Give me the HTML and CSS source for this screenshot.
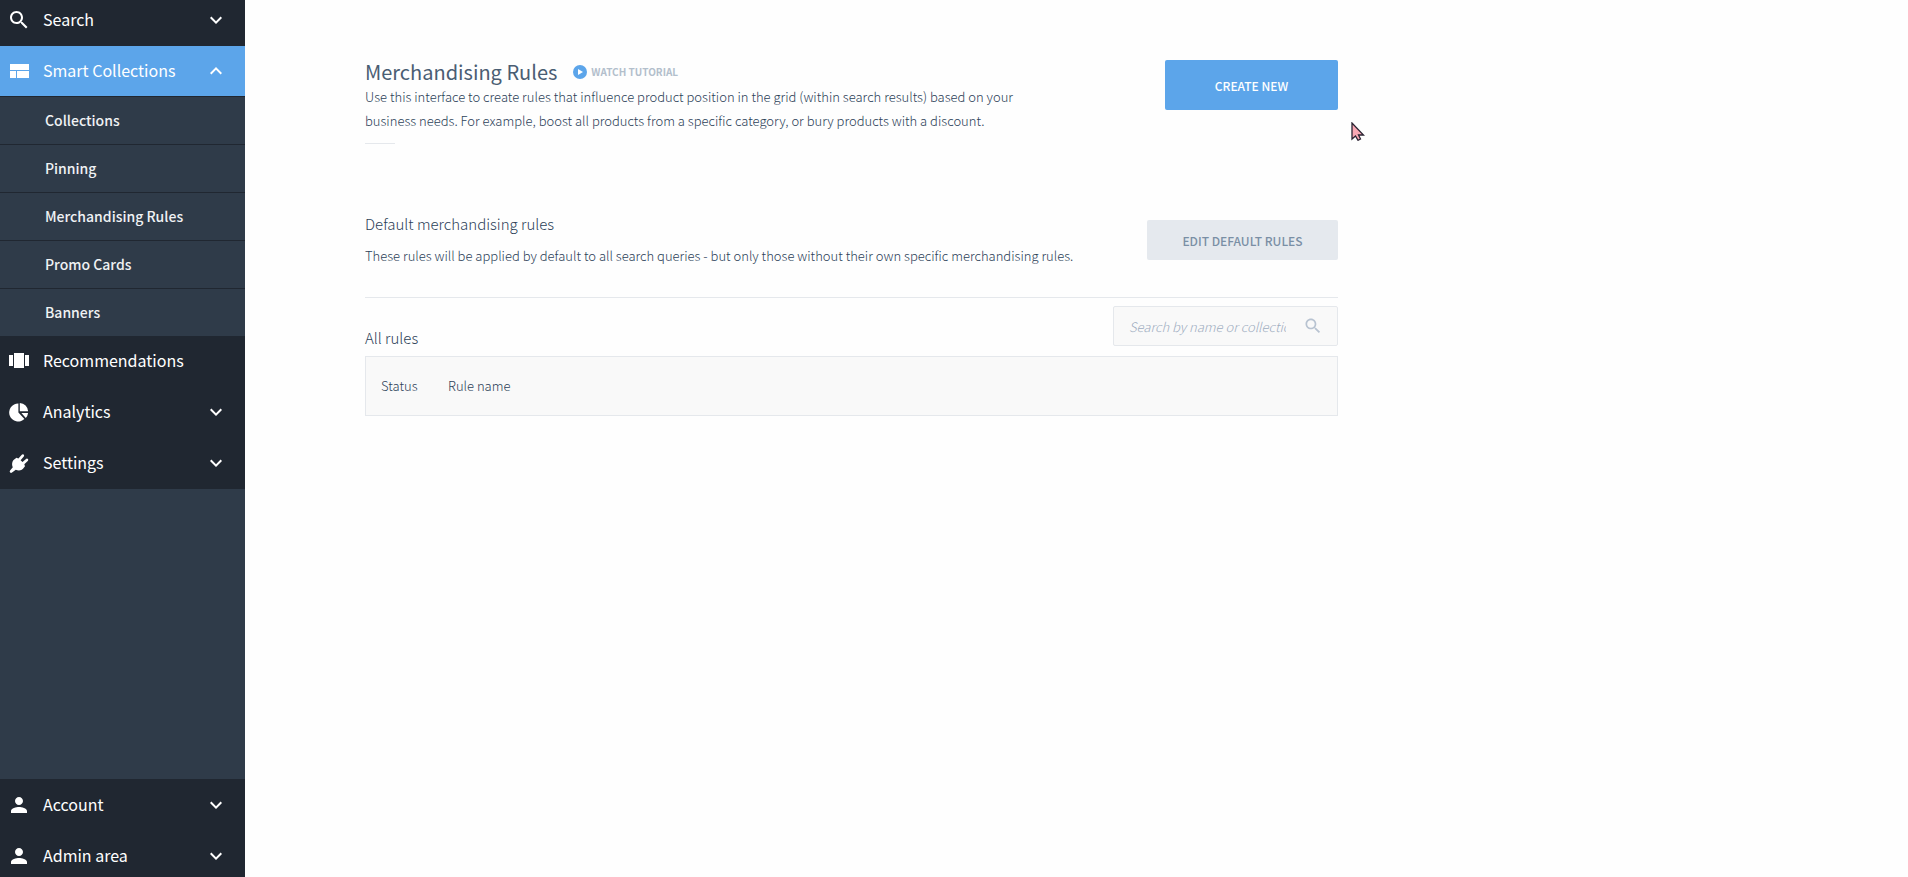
FILE: index.html
```html
<!DOCTYPE html>
<html lang="en">
<head>
  <meta charset="UTF-8">
  <meta name="viewport" content="width=device-width, initial-scale=1.0">
  <title>Merchandising Rules</title>
  <link rel="stylesheet" href="styles.css">
</head>
<body>
  <div class="app">
    <nav class="sidebar">
      <div class="nav-group nav-top">
        <a class="nav-item" href="#">
          <svg class="icon" viewBox="0 0 24 24"><path d="M15.5 14h-.79l-.28-.27C15.41 12.59 16 11.11 16 9.5 16 5.91 13.09 3 9.5 3S3 5.91 3 9.5 5.91 16 9.5 16c1.61 0 3.09-.59 4.23-1.57l.27.28v.79l5 4.99L20.49 19l-4.99-5zm-6 0C7.01 14 5 11.99 5 9.5S7.01 5 9.5 5 14 7.01 14 9.5 11.99 14 9.5 14z"/></svg>
          <span class="nav-label">Search</span>
          <svg class="icon" viewBox="0 0 24 24"><path d="M16.59 8.59L12 13.17 7.41 8.59 6 10l6 6 6-6z"/></svg>
        </a>
        <a class="nav-item active" href="#">
          <svg class="icon" viewBox="0 0 24 24"><path d="M3 19h6v-7H3v7zm7 0h12v-7H10v7zM3 5v6h19V5H3z"/></svg>
          <span class="nav-label">Smart Collections</span>
          <svg class="icon" viewBox="0 0 24 24"><path d="M12 8l-6 6 1.41 1.41L12 10.83l4.59 4.58L18 14z"/></svg>
        </a>
        <div class="submenu">
          <a class="sub-item" href="#">Collections</a>
          <a class="sub-item" href="#">Pinning</a>
          <a class="sub-item" href="#">Merchandising Rules</a>
          <a class="sub-item" href="#">Promo Cards</a>
          <a class="sub-item" href="#">Banners</a>
        </div>
        <a class="nav-item" href="#">
          <svg class="icon" viewBox="0 0 24 24"><path d="M7 19h10V4H7v15zm-5-2h4V6H2v11zM18 6v11h4V6h-4z"/></svg>
          <span class="nav-label">Recommendations</span>
        </a>
        <a class="nav-item" href="#">
          <svg class="icon" viewBox="0 0 24 24"><path d="M11.4 3.5V12.6L17.4 19A9 9 0 1 1 11.4 3.5zM12.8 3a8.6 8.6 0 0 1 8.3 8.3h-8.3zM14.4 13h6.7a8.8 8.8 0 0 1-2.3 4.9z"/></svg>
          <span class="nav-label">Analytics</span>
          <svg class="icon" viewBox="0 0 24 24"><path d="M16.59 8.59L12 13.17 7.41 8.59 6 10l6 6 6-6z"/></svg>
        </a>
        <a class="nav-item" href="#">
          <svg class="icon" viewBox="0 0 24 24"><path d="M8.2 7.7l1.2-.9 2 .8 3.4-3.9a1.3 1.3 0 0 1 2 1.7l-3.2 3.8 1.9 1.9 3.8-3.3a1.3 1.3 0 0 1 1.7 1.9l-3.7 3.5.7 2-1 1.2c-1.7 3-5.2 3.7-8.2 2.3L5 21.4a1.2 1.2 0 0 1-1.9-1.8l2.7-3.4C4.4 13.1 5.2 9.4 8.2 7.7z"/></svg>
          <span class="nav-label">Settings</span>
          <svg class="icon" viewBox="0 0 24 24"><path d="M16.59 8.59L12 13.17 7.41 8.59 6 10l6 6 6-6z"/></svg>
        </a>
      </div>
      <div class="nav-group nav-bottom">
        <a class="nav-item" href="#">
          <svg class="icon" viewBox="0 0 24 24"><path d="M12 12c2.21 0 4-1.79 4-4s-1.79-4-4-4-4 1.79-4 4 1.79 4 4 4zm0 2c-2.67 0-8 1.34-8 4v2h16v-2c0-2.66-5.33-4-8-4z"/></svg>
          <span class="nav-label">Account</span>
          <svg class="icon" viewBox="0 0 24 24"><path d="M16.59 8.59L12 13.17 7.41 8.59 6 10l6 6 6-6z"/></svg>
        </a>
        <a class="nav-item" href="#">
          <svg class="icon" viewBox="0 0 24 24"><path d="M12 12c2.21 0 4-1.79 4-4s-1.79-4-4-4-4 1.79-4 4 1.79 4 4 4zm0 2c-2.67 0-8 1.34-8 4v2h16v-2c0-2.66-5.33-4-8-4z"/></svg>
          <span class="nav-label">Admin area</span>
          <svg class="icon" viewBox="0 0 24 24"><path d="M16.59 8.59L12 13.17 7.41 8.59 6 10l6 6 6-6z"/></svg>
        </a>
      </div>
    </nav>

    <main class="main">
      <div class="content">
        <header class="page-header">
          <div class="intro">
            <div class="title-row">
              <h1>Merchandising Rules</h1>
              <a class="tutorial" href="#">
                <svg class="play" viewBox="0 0 14 14"><circle cx="7" cy="7" r="7" fill="#5ca5ea"/><path d="M5 4l5 3-5 3z" fill="#fff"/></svg>
                Watch tutorial
              </a>
            </div>
            <p>Use this interface to create rules that influence product position in the grid (within search results) based on your business needs. For example, boost all products from a specific category, or bury products with a discount.</p>
          </div>
          <button class="btn btn-primary" type="button">Create new</button>
        </header>

        <section class="defaults">
          <div class="defaults-text">
            <h2>Default merchandising rules</h2>
            <p>These rules will be applied by default to all search queries - but only those without their own specific merchandising rules.</p>
          </div>
          <button class="btn btn-default" type="button">Edit default rules</button>
        </section>

        <section class="rules">
          <div class="rules-head">
            <h2>All rules</h2>
            <label class="search">
              <input type="text" placeholder="Search by name or collection" aria-label="Search by name or collection">
              <svg class="search-icon" viewBox="0 0 24 24"><path d="M15.5 14h-.79l-.28-.27C15.41 12.59 16 11.11 16 9.5 16 5.91 13.09 3 9.5 3S3 5.91 3 9.5 5.91 16 9.5 16c1.61 0 3.09-.59 4.23-1.57l.27.28v.79l5 4.99L20.49 19l-4.99-5zm-6 0C7.01 14 5 11.99 5 9.5S7.01 5 9.5 5 14 7.01 14 9.5 11.99 14 9.5 14z"/></svg>
            </label>
          </div>
          <table class="rules-table">
            <thead>
              <tr>
                <th class="col-status">Status</th>
                <th>Rule name</th>
              </tr>
            </thead>
          </table>
        </section>
      </div>
    </main>
  </div>

  <svg class="cursor" viewBox="0 0 14 19"><path d="M1 1v16l3.5-3 2.5 4.3 2.5-1.3-2-4h5z" fill="#f9a8b4" stroke="#2b2433" stroke-width="1.3"/></svg>
</body>
</html>
```

FILE: styles.css
```css
* {
  box-sizing: border-box;
}
body {
  margin: 0;
  background-color: #fefefe;
  color: #2c4158;
  font-family: "Noto Sans CJK SC", "Open Sans", sans-serif;
  font-size: 13px;
  font-weight: 300;
  line-height: 24px;
}
h1, h2, p {
  margin: 0;
  font-weight: 300;
}
a {
  text-decoration: none;
}
.app {
  display: flex;
  height: 100vh;
  overflow: hidden;
}

/* sidebar */
.sidebar {
  display: flex;
  flex-direction: column;
  justify-content: space-between;
  width: 245px;
  flex-shrink: 0;
  background-color: #2f3b49;
}
.nav-group {
  background-color: #202731;
}
/* the list is scrolled a little past its top edge */
.nav-top {
  margin-top: -5px;
}
.nav-bottom {
  margin-bottom: -4px;
}
.nav-item {
  display: flex;
  align-items: center;
  height: 51px;
  padding: 0 17px 1px 7px;
  color: #fff;
  font-size: 16px;
  font-weight: 400;
}
.nav-bottom .nav-item {
  padding-bottom: 0;
}
.nav-item.active {
  height: 50px;
  background-color: #5ca5ea;
}
.nav-label {
  flex: 1;
  margin-left: 12px;
  padding-bottom: 2px;
}
.icon {
  width: 24px;
  height: 24px;
  fill: #fff;
}
.submenu {
  background-color: #2f3b49;
}
.sub-item {
  display: flex;
  align-items: center;
  height: 48px;
  padding: 0 0 2px 45px;
  border-top: 1px solid #202731;
  color: #f0f2f4;
  font-size: 14px;
  font-weight: 500;
}

/* content */
.main {
  flex: 1;
  padding: 60px 120px;
}
.content {
  max-width: 973px;
}
.page-header {
  display: flex;
  justify-content: space-between;
  align-items: flex-start;
}
.intro {
  max-width: 660px;
}
.intro::after {
  content: "";
  display: block;
  width: 30px;
  margin-top: 10px;
  border-top: 1px solid #e5e8ec;
}
.title-row {
  display: flex;
  align-items: center;
  gap: 16px;
  padding-bottom: 1px;
}
h1 {
  color: #4a5d73;
  font-size: 20px;
  font-weight: 400;
}
.tutorial {
  display: flex;
  align-items: center;
  gap: 4px;
  color: #b3bfcc;
  font-size: 10px;
  font-weight: 700;
  text-transform: uppercase;
}
.play {
  width: 14px;
  height: 14px;
}
.btn {
  padding: 0;
  border: 0;
  border-radius: 2px;
  font-family: inherit;
  font-size: 12px;
  font-weight: 500;
  text-transform: uppercase;
  cursor: pointer;
}
.btn-primary {
  width: 173px;
  height: 50px;
  background-color: #5ca5ea;
  color: #fff;
}
.btn-default {
  width: 191px;
  height: 40px;
  background-color: #e5e9ee;
  color: #7a8fa5;
}
.defaults {
  display: flex;
  justify-content: space-between;
  align-items: center;
  margin-top: 68px;
  padding-bottom: 29px;
  border-bottom: 1px solid #e5e8ec;
}
.defaults-text p {
  margin-top: 8px;
}
h2 {
  font-size: 15px;
}
.rules-head {
  display: flex;
  justify-content: space-between;
  align-items: flex-end;
  padding: 8px 0 10px;
}
.rules-head h2 {
  line-height: 16px;
}
.search {
  display: flex;
  align-items: center;
  width: 225px;
  height: 40px;
  padding: 0 14px 0 15px;
  border: 1px solid #e5e8ec;
  border-radius: 2px;
  background-color: #f9f9f9;
}
.search input {
  flex: 1;
  min-width: 0;
  padding: 0;
  margin-right: 17px;
  border: 0;
  outline: 0;
  background: none;
  font-family: inherit;
  font-size: 13px;
  font-style: italic;
  font-weight: 300;
}
.search input::placeholder {
  color: #9dacbf;
}
.search-icon {
  width: 20px;
  height: 20px;
  fill: #b8c3d1;
}
.rules-table {
  width: 100%;
  height: 60px;
  border: 1px solid #e5e8ec;
  border-spacing: 0;
  background-color: #f9f9f9;
}
.rules-table th {
  padding: 0 0 0 15px;
  font-weight: 300;
  text-align: left;
}
.rules-table .col-status {
  width: 67px;
}

.cursor {
  position: absolute;
  left: 1351px;
  top: 122px;
  width: 14px;
  height: 19px;
}
```
